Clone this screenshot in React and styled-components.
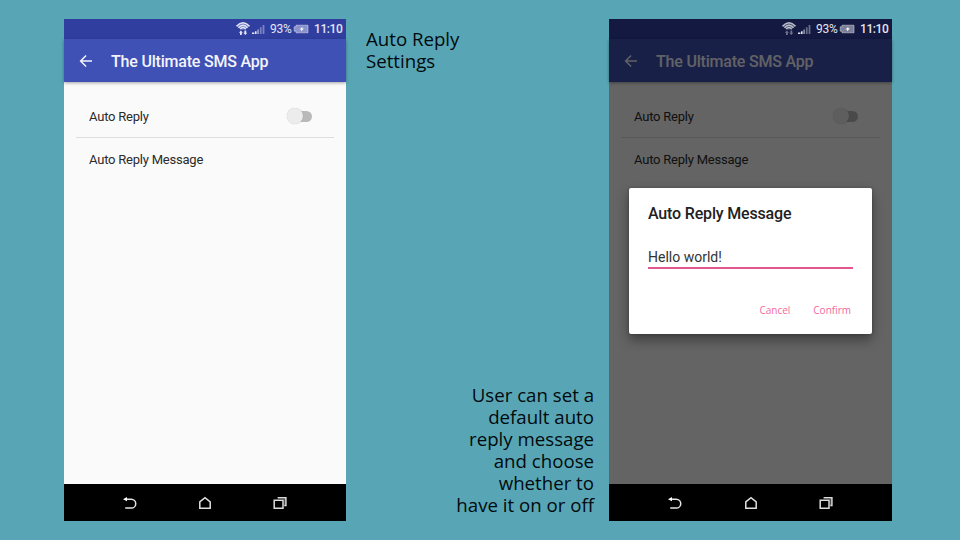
import React from "react";
import styled, { createGlobalStyle } from "styled-components";

const GlobalStyle = createGlobalStyle`
  * { box-sizing: border-box; }
  body { margin: 0; background: #58a6b5; }
`;

const Slide = styled.main`
  display: grid;
  grid-template-columns: 282px 263px 283px;
  width: 960px;
  height: 540px;
  padding: 19px 68px 19px 64px;
  background: #58a6b5;
  overflow: hidden;
`;

const Captions = styled.div`
  display: flex;
  flex-direction: column;
  justify-content: space-between;
  padding: 9px 15px 5px 20px;
`;

const Caption = styled.p`
  margin: 0;
  width: ${(p) => p.$width}px;
  align-self: ${(p) => (p.$right ? "flex-end" : "flex-start")};
  text-align: ${(p) => (p.$right ? "right" : "left")};
  white-space: nowrap;
  font: 400 18.67px/22px "Open Sans", sans-serif;
  color: #020a0d;
`;

const Phone = styled.section`
  display: flex;
  flex-direction: column;
  height: 502px;
  background: #000;
  font-family: Roboto, sans-serif;
`;

const StatusBar = styled.div`
  display: flex;
  align-items: center;
  justify-content: flex-end;
  flex: none;
  height: 20px;
  padding-right: 4px;
  background: ${(p) => (p.$dim ? "#131940" : "#303f9f")};
  color: ${(p) => (p.$dim ? "#e4e5ee" : "#e3e5f7")};
  font-size: 12px;
  line-height: 20px;
`;

const Percent = styled.span`
  width: 22px;
  margin: 0 1px 0 5px;
  letter-spacing: -0.2px;
  white-space: nowrap;
`;

const Clock = styled.span`
  width: 28px;
  margin-left: 5px;
  font-weight: 500;
  letter-spacing: -0.4px;
  white-space: nowrap;
`;

const Screen = styled.div`
  position: relative;
  display: flex;
  flex-direction: column;
  flex: 1;
  background: #fafafa;
`;

const AppBar = styled.header`
  display: flex;
  align-items: center;
  height: 43px;
  padding-left: 15px;
  background: #3f51b5;
  box-shadow: 0 1px 3px rgba(0, 0, 0, 0.35);
  color: #f3f4fb;
`;

const Title = styled.h1`
  margin: 2px 0 0 18px;
  font-size: 16px;
  font-weight: 500;
  line-height: 21px;
  letter-spacing: -0.2px;
`;

const Settings = styled.div`
  display: flex;
  flex-direction: column;
  padding: 13.5px 12px 0;
`;

const SettingRow = styled.div`
  display: flex;
  align-items: center;
  justify-content: space-between;
  height: 42.5px;
  padding: 0 22px 0 13px;
  border-bottom: ${(p) => (p.$divided ? "1px solid #dedede" : "none")};
  color: #2b2b2b;
  font-size: 13px;
  letter-spacing: -0.22px;
`;

const Toggle = styled.div`
  display: flex;
  align-items: center;
  width: 24px;
  height: 11px;
  border-radius: 6px;
  background: linear-gradient(90deg, transparent 6px, #b9b9b9 6px);
`;

const Knob = styled.span`
  flex: none;
  width: 16px;
  height: 16px;
  margin-left: -1px;
  border-radius: 50%;
  background: #ececec;
  box-shadow: 0 0 1px rgba(0, 0, 0, 0.25);
`;

const Scrim = styled.div`
  position: absolute;
  inset: 0;
  display: flex;
  align-items: flex-start;
  padding: 149px 20px 0;
  background: rgba(0, 0, 0, 0.6);
`;

const Dialog = styled.div`
  display: flex;
  flex-direction: column;
  width: 243px;
  height: 146px;
  padding: 15px 19px 15px;
  border-radius: 2px;
  background: #fff;
  box-shadow: 0 6px 12px rgba(0, 0, 0, 0.38), 0 0 3px rgba(0, 0, 0, 0.25);
`;

const DialogTitle = styled.h2`
  margin: 0;
  font-size: 16px;
  font-weight: 500;
  line-height: 22px;
  letter-spacing: -0.17px;
  color: #212121;
`;

const Field = styled.div`
  height: 23px;
  margin-top: 21px;
  border-bottom: 2px solid #e0578d;
  color: #333;
  font-size: 14px;
  line-height: 22px;
`;

const Actions = styled.div`
  display: flex;
  justify-content: flex-end;
  gap: 23px;
  margin-top: auto;
  padding-right: 2px;
`;

const ActionButton = styled.button`
  padding: 0;
  border: 0;
  background: none;
  color: #f5699b;
  font: 500 10px/18px "Open Sans", sans-serif;
`;

const NavBar = styled.nav`
  display: flex;
  flex: none;
  align-items: center;
  justify-content: space-between;
  height: 37px;
  padding: 0 58px;
  background: #000;
`;

const Icon = styled.svg`
  display: block;
  flex: none;
`;

const WifiIcon = ({ dim }) => (
  <Icon width="17" height="16" viewBox="0 0 17 16" fill="none" stroke="currentColor" opacity={dim ? 0.8 : 1}>
    <path d="M1.5 5.3Q8-1.6 14.5 5.3M3.5 6.7Q8 2 12.5 6.7M5.3 8Q8 5.2 10.7 8" strokeWidth="1.5" />
    <path d="M1.5 5Q8-2 14.5 5L10.5 8.6h-5z" fill="currentColor" opacity=".4" stroke="none" />
    <g fill="currentColor" stroke="none" opacity={dim ? 0.55 : 1}>
      <path d="M3.9 11.7 5.9 9.6l2 2.1H6.8V14H5v-2.3zM8.3 11.7h1.1V9.6h1.8v2.1h1.1l-2 2.3z" />
    </g>
  </Icon>
);

const SignalIcon = () => (
  <Icon width="13" height="11" viewBox="0 0 13 11" fill="currentColor">
    <path d="M0 8.6h2.4V10H0zM3 7.2h1.6V10H3z" />
    <path d="M5.3 5.4h1.6V10H5.3z" opacity=".6" />
    <path d="M7.9 3.2h1.7V10H7.9zM10.6 1h1.8v9h-1.8z" opacity=".42" />
  </Icon>
);

const BatteryIcon = () => (
  <Icon width="16" height="10" viewBox="0 0 16 10">
    <path d="M3 1.2h12v7.6H3V7.2H1.2V2.8H3z" fill="currentColor" fillOpacity=".5" stroke="currentColor" strokeOpacity=".5" />
    <path d="m9.4 2.8-2.8 2.6h1.8l-.5 2 3-2.9H9.2z" fill="#fff" />
  </Icon>
);

const ArrowIcon = () => (
  <Icon width="14" height="14" viewBox="0 0 14 14" fill="none" stroke="currentColor" strokeWidth="1.5">
    <path d="M13 7H2M7.1 1.5 1.6 7l5.5 5.5" />
  </Icon>
);

const BackIcon = () => (
  <Icon width="16" height="14" viewBox="0 0 16 14" fill="none" stroke="#e5e5e5" strokeWidth="1.5">
    <path d="M4 3.2h5.3a4.3 4.3 0 0 1 0 8.9H3.2" />
    <path d="M1 3.2 5 1.1v4.2z" fill="#fff" stroke="none" />
  </Icon>
);

const HomeIcon = () => (
  <Icon width="14" height="14" viewBox="0 0 14 14" fill="none" stroke="#e0e0e0" strokeWidth="1.5">
    <path d="M1.8 5.8 7 1.6l5.2 4.2v6.5H1.8z" />
  </Icon>
);

const RecentsIcon = () => (
  <Icon width="16" height="14" viewBox="0 0 16 14" fill="none" stroke="#dcdcdc">
    <path d="M2.2 4.2h8.8v8.1H2.2z" strokeWidth="1.5" />
    <path d="M5.6 1.8h8.3v7.6h-1.6" strokeWidth="1.5" />
    <path d="M12.4 2.5v7" strokeWidth="1.4" opacity=".35" />
  </Icon>
);

function AppScreen({ dialog = false }) {
  return (
    <Phone>
      <StatusBar $dim={dialog}>
        <WifiIcon dim={dialog} />
        <SignalIcon />
        <Percent>93%</Percent>
        <BatteryIcon />
        <Clock>11:10</Clock>
      </StatusBar>
      <Screen>
        <AppBar>
          <ArrowIcon />
          <Title>The Ultimate SMS App</Title>
        </AppBar>
        <Settings>
          <SettingRow $divided>
            Auto Reply
            <Toggle>
              <Knob />
            </Toggle>
          </SettingRow>
          <SettingRow>Auto Reply Message</SettingRow>
        </Settings>
        {dialog && (
          <Scrim>
            <Dialog>
              <DialogTitle>Auto Reply Message</DialogTitle>
              <Field>Hello world!</Field>
              <Actions>
                <ActionButton>Cancel</ActionButton>
                <ActionButton>Confirm</ActionButton>
              </Actions>
            </Dialog>
          </Scrim>
        )}
      </Screen>
      <NavBar>
        <BackIcon />
        <HomeIcon />
        <RecentsIcon />
      </NavBar>
    </Phone>
  );
}

export default function App() {
  return (
    <>
      <GlobalStyle />
      <Slide>
        <AppScreen />
        <Captions>
          <Caption $width={110}>
            Auto Reply
            <br />
            Settings
          </Caption>
          <Caption $width={150} $right>
            User can set a<br />
            default auto
            <br />
            reply message
            <br />
            and choose
            <br />
            whether to
            <br />
            have it on or off
          </Caption>
        </Captions>
        <AppScreen dialog />
      </Slide>
    </>
  );
}
